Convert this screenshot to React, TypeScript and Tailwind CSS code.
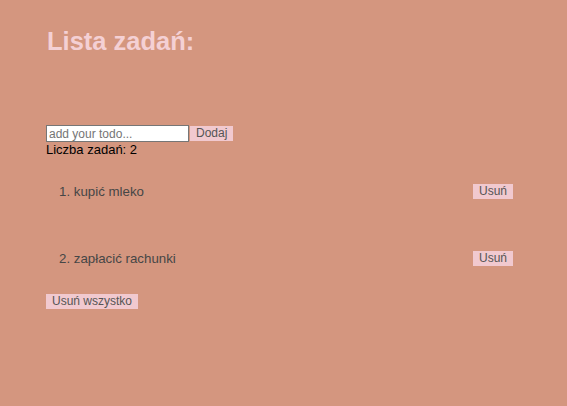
export default function App() {
  const todos = ['kupić mleko', 'zapłacić rachunki']

  return (
    <div className="min-h-screen bg-[#d4967f] px-[46px] pt-[26px] font-['Liberation_Sans',Arial,sans-serif]">
      <h1 className="pl-[1px] text-[25.5px] leading-[30px] font-bold text-[#f4d0d4]">Lista zadań:</h1>

      <div className="mt-[69px] flex items-center">
        <input
          placeholder="add your todo..."
          className="h-[17px] w-[143px] border border-[#767676] bg-white px-[2px] text-[12px] text-black placeholder:text-[#757575] outline-none"
        />
        <button className="ml-[1px] h-[15px] bg-[#f1c9cf] px-[6px] text-[12px] leading-[15px] text-[#555]">
          Dodaj
        </button>
      </div>
      <p className="text-[13px] leading-[15px] text-black">Liczba zadań: {todos.length}</p>

      <ul className="mt-[27px] pr-[8px]">
        {todos.map((todo, i) => (
          <li key={todo} className="flex h-[67px] items-start justify-between pl-[13px]">
            <span className="text-[13.3px] leading-[15px] text-[#464646]">
              {i + 1}. {todo}
            </span>
            <button className="h-[15px] bg-[#f1c9cf] px-[6px] text-[12px] leading-[15px] text-[#555]">
              Usuń
            </button>
          </li>
        ))}
      </ul>

      <button className="-mt-[24px] block h-[15px] bg-[#f1c9cf] px-[6px] text-[12px] leading-[15px] text-[#555]">
        Usuń wszystko
      </button>
    </div>
  )
}
